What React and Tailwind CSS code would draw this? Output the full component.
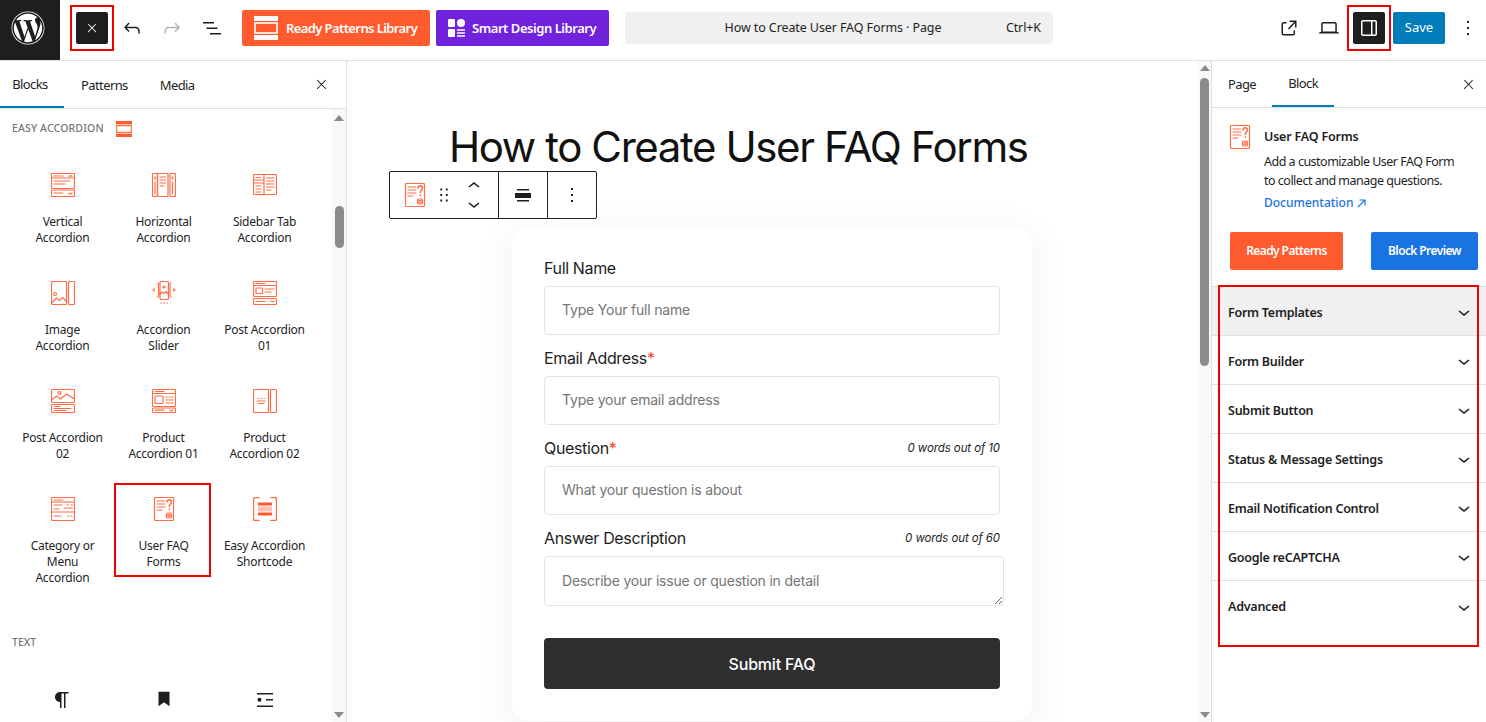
import { FaWordpress } from "react-icons/fa";

const ui = "font-['Noto_Sans',sans-serif]";

function Wp({ d, size = 24, className = "" }) {
  return (
    <svg width={size} height={size} viewBox="0 0 24 24" fill="currentColor" className={className}>
      <path d={d} />
    </svg>
  );
}

const paths = {
  close: "M13 11.8l6.1-6.3-1-1-6.1 6.2-6.1-6.2-1 1 6.1 6.3-6.5 6.7 1 1 6.5-6.6 6.5 6.6 1-1z",
  undo: "M18.3 11.7c-.6-.6-1.4-.9-2.3-.9H6.7l2.9-3.3-1.1-1-4.5 5L8.5 16l1-1-2.7-2.7H16c.5 0 .9.2 1.3.5 1 1 1 3.4 1 4.5v.3h1.5v-.2c0-1.5 0-4.3-1.5-5.7z",
  redo: "M15.6 6.5l-1.1 1 2.9 3.3H8c-.9 0-1.7.3-2.3.9-1.4 1.5-1.4 4.2-1.4 5.6v.2h1.5v-.3c0-1.1 0-3.5 1-4.5.3-.3.7-.5 1.3-.5h9.2L14.5 15l1.1 1.1 4.6-4.6-4.6-5z",
  list: "M3 6h11v1.5H3V6Zm3.5 5.5h11V13h-11v-1.5ZM21 17H10v1.5h11V17Z",
  external: "M19.5 4.5h-7V6h4.44l-5.97 6.53 1.11 1.01L18 7.02V11.5h1.5v-7ZM6.5 6A2 2 0 0 0 4.5 8v9.5a2 2 0 0 0 2 2H16a2 2 0 0 0 2-2v-3h-1.5v3a.5.5 0 0 1-.5.5H6.5a.5.5 0 0 1-.5-.5V8a.5.5 0 0 1 .5-.5h3V6h-3Z",
  laptop: "M20.5 16h-.7V8c0-1.1-.9-2-2-2H6.2c-1.1 0-2 .9-2 2v8h-.7c-.8 0-1.5.7-1.5 1.5h20c0-.8-.7-1.5-1.5-1.5zM5.7 8c0-.3.2-.5.5-.5h11.6c.3 0 .5.2.5.5v7.6H5.7V8z",
  sidebar: "M18 4H6c-1.1 0-2 .9-2 2v12c0 1.1.9 2 2 2h12c1.1 0 2-.9 2-2V6c0-1.1-.9-2-2-2zm-4 14.5H6c-.3 0-.5-.2-.5-.5V6c0-.3.2-.5.5-.5h8v13zm4.5-.5c0 .3-.2.5-.5.5h-2.5v-13H18c.3 0 .5.2.5.5v12z",
  more: "M13 19h-2v-2h2v2zm0-6h-2v-2h2v2zm0-6h-2V5h2v2z",
  chevron: "M17.5 11.6L12 16l-5.5-4.4.9-1.2L12 14l4.5-3.6 1 1.2z",
  para: "m9.99609 14v-.2251l.00391.0001v6.225h1.5v-14.5h2.5v14.5h1.5v-14.5h3v-1.5h-8.50391c-2.76142 0-5 2.23858-5 5 0 2.7614 2.23858 5 5 5z",
  bookmark: "M6 4h12v16l-6-4.5L6 20V4z",
  details: "M4 5h16v1.5H4V5Zm9 6h7v1.5h-7V11ZM4 17.5h16V19H4v-1.5ZM6.5 9.7a2 2 0 1 1 0 4 2 2 0 0 1 0-4Z",
  align: "M6 6h12v1.5H6V6Zm-2 4h16v5H4v-5Zm2 7h12v1.5H6V17Z",
  drag: "M8 7h2V5H8v2zm0 6h2v-2H8v2zm0 6h2v-2H8v2zm6-14v2h2V5h-2zm0 8h2v-2h-2v2zm0 6h2v-2h-2v2z",
  up: "M6.5 12.4L12 8l5.5 4.4-.9 1.2L12 10l-4.5 3.6-1-1.2z",
};

// orange outline icons of the accordion blocks
function Orange({ children, size = 24 }) {
  return (
    <svg width={size} height={size} viewBox="0 0 24 24" fill="none" stroke="#ff6d47" strokeWidth="1.2" strokeLinecap="round" strokeLinejoin="round">
      {children}
    </svg>
  );
}

const Line = ({ x1, x2, y }) => <path d={`M${x1} ${y}H${x2}`} />;
const Box = ({ x, y, w, h, r = 1 }) => <rect x={x} y={y} width={w} height={h} rx={r} />;

const FaqIcon = ({ size }) => (
  <Orange size={size}>
    <Box x={2.5} y={0.5} w={19} h={23} />
    <Line x1={5} x2={13} y={4} />
    <Line x1={5} x2={13} y={7} />
    <Line x1={5} x2={13} y={10} />
    <Line x1={5} x2={10} y={13} />
    <path d="M15 5c0-3 4.500-3 4.500 0 0 2-2.200 2-2.200 4.500M17.300 12v.5" strokeWidth="1.500" />
    <Box x={14.500} y={16} w={5} h={5} />
    <Box x={16} y={17.500} w={2} h={2} r={0} />
  </Orange>
);

const blockIcons = {
  vertical: (
    <Orange>
      <Box x={0.5} y={0.5} w={23} h={15} />
      <Box x={0.5} y={17} w={23} h={6.500} />
      <Line x1={0.5} x2={23.500} y={5} />
      <Line x1={3} x2={12} y={3} />
      <Line x1={3} x2={19} y={8} />
      <Line x1={3} x2={14} y={11} />
      <Line x1={3} x2={12} y={20} />
      <path d="M18 20l1.500 1 1.500-1M18 3.500l1.500-1 1.500 1" />
    </Orange>
  ),
  horizontal: (
    <Orange>
      <Box x={0.5} y={0.5} w={5} h={23} />
      <Box x={5.500} y={0.5} w={10.500} h={23} />
      <Box x={18} y={0.5} w={5.500} h={23} />
      <Line x1={8} x2={13.500} y={4} />
      <Line x1={8} x2={13.500} y={7} />
      <Line x1={8} x2={13.500} y={10} />
      <Line x1={8} x2={12} y={13} />
      <path d="M3 9v12M20.500 9v12M3.500 4l-1 1 1 1M20 4l1 1-1 1" />
    </Orange>
  ),
  sidebar: (
    <Orange>
      <Box x={0.5} y={1.500} w={23} h={20} />
      <path d="M11 1.500v20M.5 7h10.500M.5 10h10.500" />
      <Line x1={3} x2={7} y={4.500} />
      <Line x1={3} x2={8} y={13} />
      <Line x1={3} x2={8} y={16} />
      <Line x1={3} x2={8} y={19} />
      <Line x1={13.500} x2={21} y={5} />
      <Line x1={13.500} x2={21} y={8} />
      <Line x1={13.500} x2={21} y={11} />
      <Line x1={13.500} x2={21} y={14} />
      <Line x1={13.500} x2={18} y={17} />
    </Orange>
  ),
  image: (
    <Orange>
      <Box x={0.5} y={0.5} w={15} h={23} />
      <Box x={17.500} y={0.5} w={6} h={23} />
      <circle cx={4} cy={13} r={1.500} />
      <path d="M.5 22l5-5 3 2.500 3-3 4 4" />
    </Orange>
  ),
  slider: (
    <Orange>
      <Box x={8} y={0.5} w={8.500} h={18} />
      <path d="M5.500 2c1 0 1 .5 1 1v12c0 .5 0 1-1 1M19 2c-1 0-1 .5-1 1v12c0 .5 0 1 1 1M2.500 8l-1.500 1 1.500 1M21.500 8l1.500 1-1.500 1" />
      <circle cx={12} cy={6} r={1} />
      <path d="M8 13l2-2 2 1.500 2-2 2.500 2.500M9 22h.5M12 22h.5M15 22h.5" />
    </Orange>
  ),
  post1: (
    <Orange>
      <Box x={0.5} y={0.5} w={23} h={15} />
      <Box x={0.5} y={17.500} w={23} h={6} />
      <Line x1={0.5} x2={23.500} y={4.500} />
      <Line x1={3} x2={12} y={2.500} />
      <Box x={3} y={7} w={6.500} h={5.500} r={0} />
      <Line x1={12} x2={21} y={8} />
      <Line x1={12} x2={18} y={11} />
      <Line x1={3} x2={12} y={20.500} />
      <path d="M18 20l1.500 1 1.500-1" />
    </Orange>
  ),
  post2: (
    <Orange>
      <Box x={0.5} y={0.5} w={23} h={13} />
      <Box x={0.5} y={15.500} w={23} h={8} />
      <circle cx={8.500} cy={4} r={1.500} />
      <path d="M.5 11l5-4 4 3 6-5 8 5" />
      <Line x1={3} x2={9} y={17.500} />
      <Line x1={3} x2={20} y={19.500} />
      <Line x1={3} x2={15} y={21.500} />
    </Orange>
  ),
  product1: (
    <Orange>
      <Box x={0.5} y={0.5} w={23} h={17} />
      <Box x={0.5} y={19} w={23} h={4.500} />
      <Line x1={0.5} x2={23.500} y={4.500} />
      <Line x1={3} x2={12} y={2.500} />
      <Box x={3} y={7} w={8} h={7.500} />
      <path d="M14 8h1M17 8h1M20 8h1M14 11h7M14 14h7M3 21.200h9M18 21l1.500 1 1.500-1" />
    </Orange>
  ),
  product2: (
    <Orange>
      <Box x={0.5} y={0.5} w={15} h={23} />
      <Box x={17.500} y={0.5} w={6} h={23} />
      <path d="M5 9.500h.5M8 9.500h.5M11 9.500h.5M4 12h8M5 14.500h6" />
    </Orange>
  ),
  category: (
    <Orange>
      <Box x={0.5} y={0.5} w={23} h={23} />
      <path d="M.5 5h23M.5 15h23" />
      <Line x1={3} x2={12} y={3} />
      <path d="M3 8h8M3 12h5M16 8h1.500M20 8h1.500M13 11h8M3 19h7M17 19h1M20 19h1" />
    </Orange>
  ),
  shortcode: (
    <Orange>
      <path d="M6 .5H2a1.500 1.500 0 0 0-1.500 1.500v20A1.500 1.500 0 0 0 2 23.500h4M18 .5h4A1.500 1.500 0 0 1 23.500 2v20a1.500 1.500 0 0 1-1.500 1.500h-4" strokeWidth="1.400" />
      <rect x={5} y={5.500} width={14} height={3} fill="#ff5b2e" stroke="none" />
      <rect x={5} y={9.500} width={14} height={5} fill="#ffc2b0" stroke="none" />
      <rect x={5} y={15.500} width={14} height={3} fill="#ff5b2e" stroke="none" />
    </Orange>
  ),
};

// the three stacked bars of the plugin logo
const PatternsLogo = ({ w, h, color }) => (
  <svg width={w} height={h} viewBox="0 0 24 24" fill="none">
    <rect x="0" y="0" width="24" height="5" fill={color} />
    <rect x="1" y="7" width="22" height="10" stroke={color} strokeWidth="1.600" />
    <rect x="0" y="19" width="24" height="5" fill={color} />
  </svg>
);

const blocks = [
  { icon: "vertical", label: ["Vertical", "Accordion"] },
  { icon: "horizontal", label: ["Horizontal", "Accordion"] },
  { icon: "sidebar", label: ["Sidebar Tab", "Accordion"] },
  { icon: "image", label: ["Image", "Accordion"] },
  { icon: "slider", label: ["Accordion", "Slider"] },
  { icon: "post1", label: ["Post Accordion", "01"] },
  { icon: "post2", label: ["Post Accordion", "02"] },
  { icon: "product1", label: ["Product", "Accordion 01"] },
  { icon: "product2", label: ["Product", "Accordion 02"] },
  { icon: "category", label: ["Category or", "Menu", "Accordion"] },
  { icon: "faq", label: ["User FAQ", "Forms"], marked: true },
  { icon: "shortcode", label: ["Easy Accordion", "Shortcode"] },
];

const panels = ["Form Templates", "Form Builder", "Submit Button", "Status & Message Settings", "Email Notification Control", "Google reCAPTCHA", "Advanced"];

function Scrollbar({ arrowTop, thumbTop, thumbHeight, className }) {
  return (
    <div className={`flex flex-col items-center bg-[#f8f8f8] ${className}`}>
      <div className="h-0 w-0 border-x-[5px] border-b-[6px] border-x-transparent border-b-[#8a8a8a]" style={{ marginTop: arrowTop }} />
      <div className="w-[9px] rounded-full bg-[#8b8b8b]" style={{ marginTop: thumbTop, height: thumbHeight }} />
      <div className="mt-auto mb-[4px] h-0 w-0 border-x-[5px] border-t-[6px] border-x-transparent border-t-[#8a8a8a]" />
    </div>
  );
}

function TopBar() {
  return (
    <header className="flex h-[61px] shrink-0 items-center border-b border-[#e0e0e0] bg-white pb-[4px]">
      <div className="flex h-[60px] w-[60px] items-center justify-center self-start bg-[#1e1e1e] pr-[4px] pb-[4px] text-white">
        <FaWordpress size={34} />
      </div>
      <div className="relative ml-[16px] flex h-[32px] w-[32px] items-center justify-center rounded-[2px] bg-[#1e1e1e] text-white">
        <Wp d={paths.close} size={14} />
        <div className="absolute -inset-x-[6px] -inset-y-[7px] border-2 border-[#f00000]" />
      </div>
      <Wp d={paths.undo} className="ml-[12px] text-[#1e1e1e]" />
      <Wp d={paths.redo} className="ml-[16px] text-[#b4b4b4]" />
      <Wp d={paths.list} className="ml-[16px] text-[#1e1e1e]" />
      <div className={`ml-[18px] flex h-[36px] w-[188px] items-center gap-[8px] rounded-[2px] bg-[#ff5b2e] pl-[12px] text-[13px] font-semibold tracking-[-0.6px] text-white ${ui}`}>
        <PatternsLogo w={24} h={24} color="#fff" />
        <span className="whitespace-nowrap pt-[1px]">Ready Patterns Library</span>
      </div>
      <div className={`ml-[6px] flex h-[36px] w-[173px] items-center gap-[7px] rounded-[2px] bg-[#7022dd] pl-[12px] text-[13px] font-semibold tracking-[-0.45px] text-white ${ui}`}>
        <svg width="17" height="18" viewBox="0 0 17 18" fill="#fff">
          <rect x="0" y="0" width="7" height="8" rx="1" />
          <rect x="9" y="0" width="8" height="8" rx="4" />
          <rect x="0" y="10" width="7" height="8" rx="1" />
          <path d="M9 10h8v2H9zM9 13h8v2H9zM9 16h8v2H9z" opacity=".75" />
        </svg>
        <span className="whitespace-nowrap pt-[1px]">Smart Design Library</span>
      </div>
      <div className={`relative ml-[16px] flex h-[32px] w-[428px] items-center justify-center rounded-[4px] bg-[#f0f0f0] text-[12.500px] tracking-[-0.1px] text-[#1e1e1e] ${ui}`}>
        <span className="mr-[12px]">How to Create User FAQ Forms · Page</span>
        <span className="absolute right-[12px]">Ctrl+K</span>
      </div>
      <Wp d={paths.external} className="ml-[224px] text-[#1e1e1e]" />
      <Wp d={paths.laptop} className="ml-[16px] text-[#1e1e1e]" />
      <div className="relative ml-[12px] flex h-[32px] w-[32px] items-center justify-center rounded-[2px] bg-[#1e1e1e] text-white">
        <Wp d={paths.sidebar} />
        <div className="absolute -inset-x-[6px] -inset-y-[7px] border-2 border-[#f00000]" />
      </div>
      <div className={`ml-[8px] flex h-[32px] w-[52px] items-center justify-center rounded-[2px] bg-[#007cba] text-[13px] text-white ${ui}`}>Save</div>
      <Wp d={paths.more} className="ml-[11px] text-[#1e1e1e]" />
    </header>
  );
}

function LeftPanel() {
  return (
    <aside className={`flex w-[347px] shrink-0 flex-col border-r border-[#e0e0e0] bg-white ${ui}`}>
      <div className="flex h-[48px] shrink-0 items-center border-b border-[#e0e0e0] text-[13px] tracking-[-0.6px] text-[#1e1e1e]">
        <div className="flex h-full w-[64px] items-center justify-center border-b-2 border-[#007cba] pt-[2px] pr-[4px]">Blocks</div>
        <div className="flex h-full items-center pt-[2px] pl-[17px]">Patterns</div>
        <div className="flex h-full items-center pt-[2px] pl-[32px]">Media</div>
        <Wp d={paths.close} size={15} className="ml-auto mr-[17px]" />
      </div>
      <div className="flex min-h-0 flex-1 overflow-hidden">
        <div className="min-w-0 flex-1 pl-[12px]">
          <div className="flex h-[39px] items-center gap-[12px] text-[10.500px] font-medium uppercase tracking-[0.15px] text-[#757575]">
            EASY ACCORDION
            <PatternsLogo w={16} h={16} color="#ff5b2e" />
          </div>
          <div className="mt-[25px] grid w-[303px] grid-cols-3">
            {blocks.map((b) => (
              <div key={b.icon} className="relative flex h-[108px] flex-col items-center text-center text-[12px] leading-[16px] tracking-[-0.25px] text-[#1e1e1e]">
                {b.icon === "faq" ? <FaqIcon /> : blockIcons[b.icon]}
                <div className="mt-[17px] whitespace-nowrap">
                  {b.label.map((l) => (
                    <div key={l}>{l}</div>
                  ))}
                </div>
                {b.marked && <div className="absolute top-[-14px] left-[1px] h-[94px] w-[97px] border-2 border-[#f00000]" />}
              </div>
            ))}
          </div>
          <div className="mt-[27px] text-[10.500px] font-medium leading-[20px] text-[#757575]">TEXT</div>
          <div className="mt-[36px] grid w-[303px] grid-cols-3 justify-items-center text-[#1e1e1e]">
            <Wp d={paths.para} className="-ml-[2px]" />
            <Wp d={paths.bookmark} size={22} />
            <Wp d={paths.details} />
          </div>
        </div>
        <Scrollbar arrowTop="6px" thumbTop="85px" thumbHeight="42px" className="w-[14px] shrink-0" />
      </div>
    </aside>
  );
}

function Field({ label, required, counter, children }) {
  return (
    <div className="mb-[11px]">
      <div className="mb-[6px] flex h-[24px] items-center justify-between text-[16px] tracking-[-0.35px] text-[#1e1e1e]">
        <span>
          {label}
          {required && <span className="text-[#f0432a]">*</span>}
        </span>
        {counter && <span className="pt-[2px] text-[11.500px] italic tracking-[-0.1px]">{counter}</span>}
      </div>
      {children}
    </div>
  );
}

const inputCls = "block h-[49px] w-[456px] rounded-[4px] border border-[#e3e3e3] bg-white px-[17px] pb-[2px] text-[14px] tracking-[-0.2px] outline-none placeholder:text-[#757575]";

function Canvas() {
  return (
    <main className="relative min-w-0 flex-1 overflow-hidden bg-white font-['Inter',sans-serif]">
      <h1 className="mt-[60px] ml-[102px] whitespace-nowrap text-[42px] font-normal leading-[52px] tracking-[-1.4px] text-[#111]">How to Create User FAQ Forms</h1>
      {/* block toolbar floats over the canvas */}
      <div className="absolute top-[110px] left-[42px] flex h-[48px] w-[208px] items-center rounded-[2px] border border-[#1e1e1e] bg-white text-[#1e1e1e]">
        <div className="flex h-full w-[109px] items-center border-r border-[#1e1e1e] pl-[13px]">
          <FaqIcon size={24} />
          <Wp d={paths.drag} size={22} className="ml-[6px]" />
          <div className="ml-[7px] flex flex-col">
            <Wp d={paths.up} className="-mb-[3px]" />
            <Wp d={paths.chevron} className="-mt-[3px]" />
          </div>
        </div>
        <div className="flex h-full w-[49px] items-center justify-center border-r border-[#1e1e1e]">
          <Wp d={paths.align} />
        </div>
        <div className="flex flex-1 items-center justify-center">
          <Wp d={paths.more} />
        </div>
      </div>
      <form className="mt-[54px] ml-[165px] w-[520px] rounded-[16px] bg-white px-[32px] pt-[29px] pb-[32px] shadow-[0_8px_40px_rgba(0,0,0,0.07)]">
        <Field label="Full Name">
          <input readOnly placeholder="Type Your full name" className={inputCls} />
        </Field>
        <Field label="Email Address" required>
          <input readOnly placeholder="Type your email address" className={inputCls} />
        </Field>
        <Field label="Question" required counter="0 words out of 10">
          <input readOnly placeholder="What your question is about" className={inputCls} />
        </Field>
        <Field label="Answer Description" counter="0 words out of 60">
          <textarea readOnly placeholder="Describe your issue or question in detail" className={`${inputCls} !h-[50px] !w-[460px] pt-[13px]`} />
        </Field>
        <div className="mt-[32px] flex h-[51px] w-[456px] items-center justify-center rounded-[4px] bg-[#2f2f2f] text-[16px] font-medium tracking-[-0.2px] text-white">Submit FAQ</div>
      </form>
    </main>
  );
}

function RightPanel() {
  return (
    <aside className={`w-[275px] shrink-0 border-l border-[#e0e0e0] bg-white ${ui}`}>
      <div className="flex h-[47px] items-center border-b border-[#e0e0e0] text-[13px] tracking-[-0.6px] text-[#1e1e1e]">
        <div className="pt-[2px] pl-[16px]">Page</div>
        <div className="ml-[16px] flex h-full w-[62px] items-center justify-center border-b-2 border-[#007cba] pt-[2px]">Block</div>
        <Wp d={paths.close} size={15} className="ml-auto mr-[10px]" />
      </div>
      <div className="flex pt-[17px] pl-[16px]">
        <FaqIcon />
        <div className="ml-[12px] text-[12.500px] tracking-[-0.5px] text-[#1e1e1e]">
          <div className="font-semibold leading-[24px] tracking-[-0.2px]">User FAQ Forms</div>
          <div className="mt-[3px] leading-[19px]">
            Add a customizable User FAQ Form
            <br />
            to collect and manage questions.
          </div>
          <div className="mt-[3px] flex items-center gap-[4px] text-[12px] font-medium leading-[20px] tracking-normal text-[#1a73e2]">
            Documentation
            <svg width="9" height="9" viewBox="0 0 9 9" fill="none" stroke="currentColor" strokeWidth="1.200">
              <path d="M1 8l7-7M2.500 1H8v5.500" />
            </svg>
          </div>
        </div>
      </div>
      <div className="mt-[19px] flex items-center pl-[18px] text-[12px] font-semibold tracking-[-0.6px] text-white">
        <div className="flex h-[38px] w-[113px] items-center justify-center rounded-[2px] bg-[#ff5b2e]">Ready Patterns</div>
        <div className="ml-[28px] flex h-[38px] w-[107px] items-center justify-center rounded-[2px] bg-[#1a73e2]">Block Preview</div>
      </div>
      <div className="relative mt-[16px] border-t border-[#e0e0e0]">
        {panels.map((p, i) => (
          <div key={p} className={`flex h-[49px] items-center pr-[10px] pl-[16px] text-[12.500px] font-semibold tracking-[-0.25px] text-[#1e1e1e] ${i === 0 ? "bg-[#f0f0f0]" : ""} ${i < panels.length - 1 ? "border-b border-[#e0e0e0]" : ""}`}>
            <span className="pt-[4px]">{p}</span>
            <Wp d={paths.chevron} className="mt-[2px] ml-auto" />
          </div>
        ))}
        <div className="absolute top-[-2px] right-[7px] left-[6px] h-[362px] border-2 border-[#f00000]" />
      </div>
    </aside>
  );
}

export default function App() {
  return (
    <div className="flex h-[722px] w-[1486px] flex-col overflow-hidden bg-white">
      <TopBar />
      <div className="flex min-h-0 flex-1">
        <LeftPanel />
        <Canvas />
        <Scrollbar arrowTop="4px" thumbTop="7px" thumbHeight="288px" className="w-[13px] shrink-0" />
        <RightPanel />
      </div>
    </div>
  );
}
